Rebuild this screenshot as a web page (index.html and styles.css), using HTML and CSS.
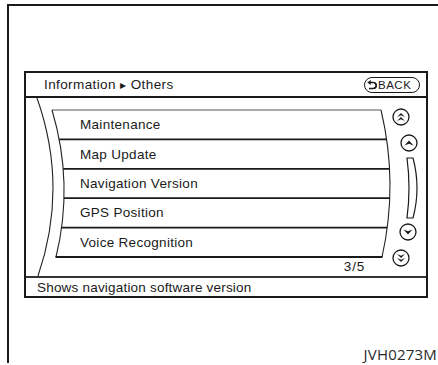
FILE: index.html
```html
<!DOCTYPE html>
<html>
<head>
<meta charset="utf-8">
<link rel="stylesheet" href="styles.css">
</head>
<body>
<div class="page">
  <div class="screen">
    <div class="header">
      <span class="crumb">Information <span class="tri">▸</span> Others</span>
      <span class="back">
        <svg class="back-icon" viewBox="0 0 10 10" width="10" height="10">
          <path d="M3.5 2.5 H6.2 A3 3 0 0 1 6.2 8.5 H2" fill="none" stroke="#1a1a1a" stroke-width="1.7"/>
          <path d="M0.3 2.5 L3.8 0 L3.8 5 Z" fill="#1a1a1a"/>
        </svg>
        <span class="back-text">BACK</span>
      </span>
    </div>
    <div class="middle">
      <svg class="frame" viewBox="0 0 400 178" width="400" height="178">
        <path d="M11 0 Q42.5 89 12 178" fill="none" stroke="#222" stroke-width="1.1"/>
        <path d="M26 12 L355 12" fill="none" stroke="#555" stroke-width="1"/>
        <path d="M26 12 Q48 85.5 30 159" fill="none" stroke="#222" stroke-width="1.1"/>
        <path d="M355 12 Q372.5 85.5 356 159" fill="none" stroke="#222" stroke-width="1.1"/>
        <g stroke="#1a1a1a" stroke-width="1.8">
          <line x1="33.2" y1="41.4" x2="360.4" y2="41.4"/>
          <line x1="37.2" y1="70.8" x2="363.6" y2="70.8"/>
          <line x1="38" y1="100.2" x2="363.8" y2="100.2"/>
          <line x1="35.6" y1="129.6" x2="361.2" y2="129.6"/>
          <line x1="29.5" y1="159" x2="356.5" y2="159"/>
        </g>
        <g fill="#fff" stroke="#1a1a1a" stroke-width="1.3">
          <circle cx="375" cy="19" r="8"/>
          <circle cx="383" cy="45" r="8"/>
          <circle cx="382" cy="134" r="8"/>
          <circle cx="375" cy="160" r="8"/>
          <path d="M381 60 L387 60 Q395 90 387 120 L381 120 Q385 90 381 60 Z" stroke-width="1.2"/>
        </g>
        <g fill="#1a1a1a">
          <path d="M371 19 L375 15 L379 19 L375 17.3 Z"/>
          <path d="M371 23 L375 19 L379 23 L375 21.3 Z"/>
          <path d="M378.5 47.5 L383 42.5 L387.5 47.5 L383 45.8 Z"/>
          <path d="M377.5 131.5 L382 136.5 L386.5 131.5 L382 133.2 Z"/>
          <path d="M371 156 L375 160 L379 156 L375 157.7 Z"/>
          <path d="M371 160 L375 164 L379 160 L375 161.7 Z"/>
        </g>
      </svg>
      <div class="list">
        <div class="row">Maintenance</div>
        <div class="row">Map Update</div>
        <div class="row">Navigation Version</div>
        <div class="row">GPS Position</div>
        <div class="row">Voice Recognition</div>
      </div>
      <div class="pager">3/5</div>
    </div>
    <div class="status">Shows navigation software version</div>
  </div>
  <div class="caption">JVH0273M</div>
</div>
</body>
</html>
```
FILE: styles.css
```css
html, body {
  margin: 0;
  padding: 0;
  background: #fff;
}
body {
  font-family: "Liberation Sans", Arial, sans-serif;
  color: #1a1a1a;
}
.page {
  margin: 4px 0 0 7px;
  border-top: 2px solid #1a1a1a;
  border-left: 2px solid #1a1a1a;
  height: 359px;
  box-sizing: border-box;
  padding: 65px 1px 0 15px;
}
.screen {
  width: 404px;
  height: 227px;
  box-sizing: border-box;
  border: 2px solid #1a1a1a;
  display: flex;
  flex-direction: column;
}
.header {
  height: 25px;
  box-sizing: border-box;
  border-bottom: 2px solid #1a1a1a;
  display: flex;
  align-items: center;
  justify-content: space-between;
  padding: 0 6px 0 18px;
}
.crumb {
  font-size: 13.5px;
  letter-spacing: 0.4px;
}
.tri {
  font-family: "DejaVu Sans", sans-serif;
  font-size: 12px;
}
.back {
  width: 56px;
  height: 16px;
  box-sizing: border-box;
  border: 1.5px solid #1a1a1a;
  border-radius: 8px;
  display: flex;
  align-items: center;
  padding-left: 2px;
  gap: 1px;
}
.back-icon {
  display: block;
}
.back-text {
  font-size: 11.5px;
  letter-spacing: 0.5px;
  line-height: 12px;
}
.middle {
  position: relative;
  height: 178px;
  display: flex;
  flex-direction: column;
  padding-top: 12px;
  box-sizing: border-box;
}
.frame {
  position: absolute;
  left: 0;
  top: 0;
}
.list {
  position: relative;
  display: flex;
  flex-direction: column;
}
.row {
  height: 29.4px;
  display: flex;
  align-items: center;
  padding-left: 54px;
  font-size: 13.5px;
  letter-spacing: 0.3px;
}
.pager {
  position: relative;
  flex: 1;
  display: flex;
  align-items: center;
  justify-content: flex-end;
  padding-right: 61px;
  font-size: 13.5px;
  letter-spacing: 0.8px;
}
.status {
  flex: 1;
  border-top: 2px solid #333;
  display: flex;
  align-items: center;
  padding-left: 11px;
  font-size: 13.5px;
  letter-spacing: 0.2px;
}
.caption {
  margin-top: 46px;
  text-align: right;
  font-family: "Open Sans", sans-serif;
  font-size: 15px;
  color: #2a2a2a;
  letter-spacing: 0.2px;
}
```
